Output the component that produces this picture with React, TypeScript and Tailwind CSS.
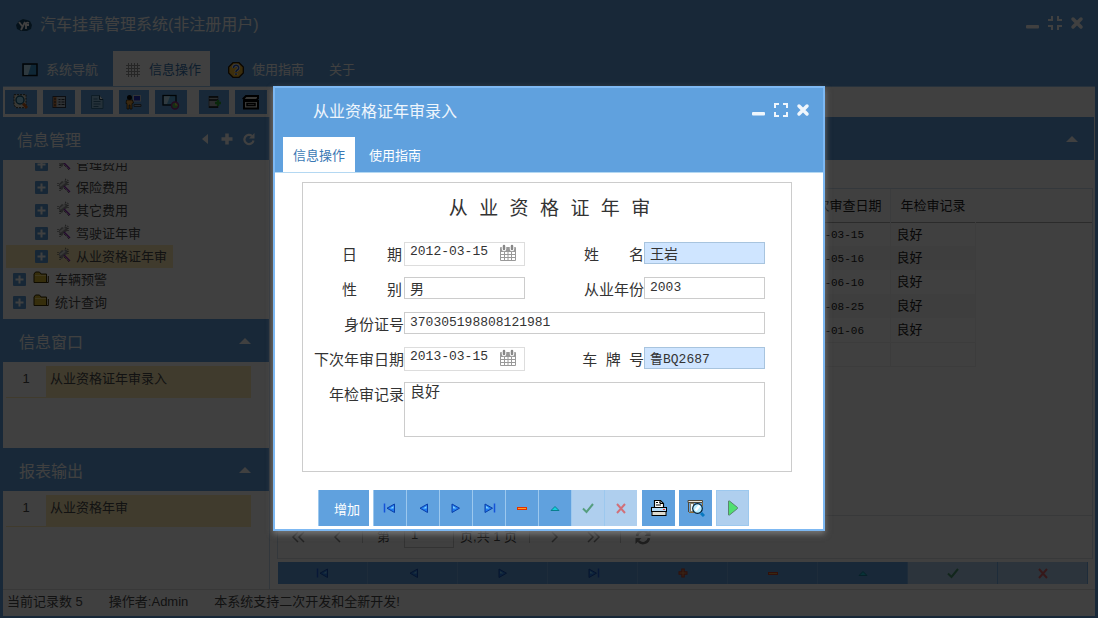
import React from "react";

const treeChildren = ["管理费用", "保险费用", "其它费用", "驾驶证年审", "从业资格证年审"];
const treeRoots = ["车辆预警", "统计查询"];
const records = ["2013-03-15", "2013-05-16", "2013-06-10", "2013-08-25", "2014-01-06"];

function MinimizeIcon() {
  return (
    <svg className="size-4" viewBox="0 0 16 16">
      <rect x="1" y="10" width="13" height="3.500" rx="1" fill="currentColor" />
    </svg>
  );
}

function MaximizeIcon() {
  return (
    <svg className="size-4" viewBox="0 0 16 16" fill="none" stroke="currentColor" strokeWidth="2">
      <path d="M2 6V2h4M10 2h4v4M14 10v4h-4M6 14H2v-4" />
    </svg>
  );
}

function RestoreIcon() {
  return (
    <svg className="size-4" viewBox="0 0 16 16" fill="none" stroke="currentColor" strokeWidth="2">
      <path d="M1 5h4V1M11 1v4h4M15 11h-4v4M5 15v-4H1" />
    </svg>
  );
}

function CloseIcon() {
  return (
    <svg className="size-4" viewBox="0 0 16 16" fill="none" stroke="currentColor" strokeWidth="3.500" strokeLinecap="round">
      <path d="M4 4l8 8M12 4l-8 8" />
    </svg>
  );
}

function WindowControls({ restore }: { restore?: boolean }) {
  return (
    <div className="flex items-center gap-1.5 pb-0.5">
      <button type="button" aria-label="最小化"><MinimizeIcon /></button>
      <button type="button" aria-label="最大化">{restore ? <RestoreIcon /> : <MaximizeIcon />}</button>
      <button type="button" aria-label="关闭"><CloseIcon /></button>
    </div>
  );
}

function CaretUp() {
  return (
    <svg className="h-1.5 w-3" viewBox="0 0 12 6">
      <path d="M6 0l6 6H0z" fill="currentColor" />
    </svg>
  );
}

type NavName = "first" | "prev" | "next" | "last" | "plus" | "minus" | "up" | "check" | "cross";

function NavIcon({ name }: { name: NavName }) {
  const left = (
    <>
      <path d="M12.500 4v8.500L5 8.200z" fill="#1f7af0" stroke="#0b3fa8" />
      <path d="M11.500 6v2.500H8z" fill="#7fd4ff" />
    </>
  );
  const right = (
    <>
      <path d="M4 4v8.500l7.500-4.300z" fill="#1f7af0" stroke="#0b3fa8" />
      <path d="M5 6v2.500h3.500z" fill="#7fd4ff" />
    </>
  );
  return (
    <svg className="size-4" viewBox="0 0 16 16">
      {name === "first" && <>{left}<path d="M2.500 3.500v9" stroke="#1452d8" strokeWidth="1.500" /></>}
      {name === "prev" && left}
      {name === "next" && right}
      {name === "last" && <>{right}<path d="M13.500 3.500v9" stroke="#1452d8" strokeWidth="1.500" /></>}
      {name === "plus" && (
        <>
          <path d="M8 3.500v9M3.500 8h9" stroke="#d82a00" strokeWidth="3.500" />
          <path d="M8 4.500v7M4.500 8h7" stroke="#ff9a3c" strokeWidth="1" />
        </>
      )}
      {name === "minus" && (
        <>
          <rect x="3" y="7" width="10" height="3" fill="#e03000" />
          <rect x="4" y="8" width="8" height="1" fill="#ffa020" />
        </>
      )}
      {name === "up" && <path d="M8 6.500l4 4H4z" fill="#12d0dc" stroke="#087f90" />}
      {name === "check" && <path d="M3 8.500l3.500 3.500L13 4" fill="none" stroke="#2f8a50" strokeWidth="2" />}
      {name === "cross" && <path d="M4 4l8 9M12 4l-8 9" fill="none" stroke="#e04848" strokeWidth="2" />}
    </svg>
  );
}

function AppLogo() {
  return (
    <svg className="size-4" viewBox="0 0 16 16">
      <path d="M3 4l4-2 4 1 3 1 2 4-1 4-4 2H5L1 12 0 8z" fill="#174a6c" />
      <path d="M3 5l3 4M9 5l-4 8M10 12V7q0-2 3-1M9 8h4" fill="none" stroke="#fff" strokeWidth="1.800" />
    </svg>
  );
}

function MonitorIcon() {
  return (
    <svg className="h-3.5 w-4" viewBox="0 0 16 14">
      <rect x="1" y="1" width="14" height="11.500" fill="#3f9cd8" stroke="#061018" strokeWidth="1.500" />
      <path d="M2 2h7L6 12H2z" fill="#b8e4fa" />
    </svg>
  );
}

function GridIcon() {
  return (
    <svg className="size-4" viewBox="0 0 16 16">
      <path d="M3.500 1v14M6.500 1v14M9.500 1v14M12.500 1v14M1 3.500h14M1 6.500h14M1 9.500h14M1 12.500h14" stroke="#999" />
    </svg>
  );
}

function HelpIcon() {
  return (
    <svg className="size-4" viewBox="0 0 16 16">
      <path d="M5 .7h6L15.300 5v6L11 15.300H5L.7 11V5z" fill="#f0b830" stroke="#2a1800" strokeWidth="1.300" />
      <path d="M5.500 6q0-2.700 2.600-2.700T10.700 6q0 1.200-1.400 2T8 10M8 11.200v1.900" fill="none" stroke="#f4f4ff" strokeWidth="3" />
      <path d="M5.500 6q0-2.700 2.600-2.700T10.700 6q0 1.200-1.400 2T8 10M8 11.200v1.900" fill="none" stroke="#2a56b0" strokeWidth="1.600" />
    </svg>
  );
}

function PreviewIcon() {
  return (
    <svg className="h-4 w-[18px]" viewBox="0 0 18 16">
      <path d="M2 .7h12v13H4L2 11z" fill="#e4e0d0" stroke="#3a3428" strokeDasharray="2 1" />
      <circle cx="8" cy="6" r="4" fill="#9cdcf6" stroke="#125878" strokeWidth="1.400" />
      <path d="M11 9.500l4 4.500" stroke="#c05818" strokeWidth="2.800" />
    </svg>
  );
}

function ListIcon() {
  return (
    <svg className="size-4" viewBox="0 0 16 16">
      <rect x="2" y="2.500" width="12.500" height="11" fill="#b8c4d0" stroke="#303a48" />
      <path d="M2.500 3h3v10h-3z" fill="#d07838" />
      <path d="M3 5h2M3 8h2M3 11h2M7.500 5.500h2M7.500 8h2M7.500 10.500h2M10.500 5.500h3M10.500 8h3M10.500 10.500h3" stroke="#26303a" />
    </svg>
  );
}

function PageIcon() {
  return (
    <svg className="size-4" viewBox="0 0 16 16">
      <path d="M2.500 1.500h8l3.500 4v9H2.500z" fill="#8fbfe0" stroke="#38759c" />
      <path d="M10.500 1.500v4H14" fill="#fff" stroke="#184058" />
      <path d="M4.500 5h4M4.500 7.500h7M4.500 10h7M4.500 12.500h5" stroke="#3a6f94" />
    </svg>
  );
}

function OperatorIcon() {
  return (
    <svg className="h-4 w-[18px]" viewBox="0 0 18 16">
      <rect x="8.500" y="1.500" width="7" height="5.500" fill="#2430c0" stroke="#c8ccd4" />
      <path d="M9 10.500h7v2H9z" fill="#a8acb4" stroke="#404850" />
      <circle cx="4.500" cy="3.500" r="2.500" fill="#080808" />
      <path d="M1.500 6h6l1 3-1.500.5V15H5v-4H4v4H2v-5.500H1z" fill="#e5a040" stroke="#2a1800" strokeWidth=".7" />
    </svg>
  );
}

function DisplayIcon() {
  return (
    <svg className="h-4 w-[18px]" viewBox="0 0 18 16">
      <rect x="1" y="1.500" width="13" height="9.500" fill="#5cb0e4" stroke="#061018" strokeWidth="1.300" />
      <path d="M2 2.300h6L5 10H2z" fill="#c2e6fa" />
      <circle cx="13" cy="11.500" r="3.500" fill="#58b858" stroke="#8f2a86" strokeWidth="1.500" />
      <path d="M13 8.500v3h3" fill="#e3d040" />
    </svg>
  );
}

function ServerAddIcon() {
  return (
    <svg className="size-4" viewBox="0 0 16 16">
      <rect x="3" y="2.500" width="9" height="11" fill="#b0b4b8" stroke="#60666c" />
      <path d="M3 3h9M3 6h9M3 13h9" stroke="#141a20" strokeWidth="1.300" />
      <path d="M12 6v6M9 9h6" stroke="#28a030" strokeWidth="2.400" />
    </svg>
  );
}

function CassetteIcon() {
  return (
    <svg className="h-4 w-[18px]" viewBox="0 0 18 16">
      <path d="M4 2h12v2.500L14 6H3L1.500 4.500z" fill="#e8e8e0" stroke="#000" strokeWidth="2" />
      <rect x="2" y="7" width="14" height="7.500" fill="#e8e8e0" stroke="#000" strokeWidth="2" />
      <path d="M5 9.500h8v2H5z" fill="#fff" stroke="#000" strokeWidth="1.500" />
    </svg>
  );
}

function PrinterIcon() {
  return (
    <svg className="size-[18px]" viewBox="0 0 18 18">
      <path d="M4.500 8V1.500h6l3 3V8" fill="#fff" stroke="#000" strokeWidth="1.200" />
      <path d="M6 3.500h2M9.500 3.500h1M6 6h5M10 1.500v3h3" stroke="#000" fill="none" />
      <rect x="1.500" y="8.500" width="15" height="4" fill="#b8dcf8" stroke="#000" />
      <rect x="2" y="12.500" width="14" height="4" fill="#dedbd0" stroke="#000" />
      <path d="M13 10.500h2" stroke="#f03030" />
    </svg>
  );
}

function SearchPageIcon() {
  return (
    <svg className="size-[18px]" viewBox="0 0 18 18">
      <path d="M1 1.500h14.500v2H1zM1.500 3.500V13" fill="#e8e4d8" stroke="#504838" />
      <rect x="3.500" y="4.500" width="3" height="8" fill="#e8f4fa" stroke="#8a8068" />
      <path d="M2 13.500h5M15.500 4v3" stroke="#8a6a38" />
      <circle cx="10.500" cy="9.500" r="4.800" fill="#b8ecff" stroke="#002038" strokeWidth="1.200" />
      <path d="M8.500 11.500l4-5" stroke="#fff" strokeWidth="2.500" />
      <path d="M14 14l3 3" stroke="#0878c0" strokeWidth="3" />
    </svg>
  );
}

function PlayIcon() {
  return (
    <svg className="h-4 w-3" viewBox="0 0 12 16">
      <path d="M1.500 1v14h1l8-6.500v-1L2.500 1z" fill="#4fe070" stroke="#5a8470" />
    </svg>
  );
}

function CalendarIcon() {
  return (
    <svg className="h-[18px] w-4" viewBox="0 0 16 18">
      <rect x="0" y="3" width="16" height="14" rx="1" fill="#999" />
      <path d="M4 2v3M12 2v3" stroke="#fff" strokeWidth="4.500" strokeLinecap="round" />
      <path d="M4 2v3M12 2v3" stroke="#888" strokeWidth="2.500" strokeLinecap="round" />
      <path d="M1 8h3v2H1zM5 8h2.500v2H5zM8.500 8H11v2H8.500zM12 8h3v2h-3zM1 11h3v2H1zM5 11h2.500v2H5zM8.500 11H11v2H8.500zM12 11h3v2h-3zM1 14h3v2H1zM5 14h2.500v2H5zM8.500 14H11v2H8.500zM12 14h3v2h-3z" fill="#fff" />
    </svg>
  );
}

function FolderIcon() {
  return (
    <svg className="h-4 w-4" viewBox="0 0 16 16">
      <path d="M1 12.500V4l1.500-2h4L8 4h5.500v8.500z" fill="#d8b830" stroke="#3a2c00" />
      <path d="M3.500 12.500h11.800V6" fill="none" stroke="#3a2c00" />
      <path d="M2 5.500h11" stroke="#f8e080" />
    </svg>
  );
}

function ToolIcon() {
  return (
    <svg className="size-4" viewBox="0 0 16 16">
      <path d="M3 6l3-3 2 1 1-2 3 2-1 3-3 2-2 3-2-1-1-3z" fill="#999" />
      <path d="M2 5v4M4 10v4M9 1l4 2M12 4v3" stroke="#444" strokeDasharray="1 1" />
      <path d="M4 8l5-4" stroke="#ddd" strokeWidth="2" />
      <path d="M8 8l6 6" stroke="#8a28b0" strokeWidth="1.500" />
      <path d="M8 10l5 5" stroke="#333" strokeDasharray="1 1" />
    </svg>
  );
}

function ExpandBox() {
  return (
    <svg className="size-[13px] shrink-0" viewBox="0 0 13 13">
      <rect width="13" height="13" rx="1" fill="#5b9bd5" />
      <path d="M6.500 2.500v8M2.500 6.500h8" stroke="#fff" strokeWidth="2" />
    </svg>
  );
}

function SidePanel({ title, item }: { title: string; item: string }) {
  return (
    <section className="h-[129px]">
      <header className="flex h-[43px] items-center justify-between bg-[#60a1de] pr-[18px] pl-4 text-white">
        <h2 className="pt-1 text-base leading-6">{title}</h2>
        <button type="button" aria-label="折叠"><CaretUp /></button>
      </header>
      <table className="mt-1 ml-[3px] w-[245px] border-collapse">
        <tbody>
          <tr className="h-[31px] border-b border-[#fdebb5] align-top">
            <td className="w-10 text-center leading-[25px]">1</td>
            <td className="bg-[#fdebb5] pl-1 leading-[25px]">{item}</td>
          </tr>
        </tbody>
      </table>
    </section>
  );
}

const toolbar: [string, () => React.ReactElement, string][] = [
  ["预览", PreviewIcon, "w-8"],
  ["列表", ListIcon, "w-8"],
  ["文档", PageIcon, "w-8"],
  ["操作员", OperatorIcon, "w-[30px]"],
  ["显示", DisplayIcon, "mr-1.5 w-8"],
  ["数据", ServerAddIcon, "w-[30px]"],
  ["备份", CassetteIcon, "w-8"],
];

const gridNav: [NavName, string][] = [
  ["first", "首条"],
  ["prev", "上一条"],
  ["next", "下一条"],
  ["last", "末条"],
  ["plus", "新增"],
  ["minus", "删除"],
  ["up", "编辑"],
  ["check", "保存"],
  ["cross", "取消"],
];

function MainTab({ label, icon, active }: { label: string; icon?: React.ReactNode; active?: boolean }) {
  return (
    <button
      type="button"
      className={
        "flex h-[35px] items-center gap-2 pt-0.5 pr-[9px] text-[13px] " +
        (icon ? "pl-3 " : "pl-2.5 ") +
        (active ? "bg-white text-[#3a78b4]" : "text-white")
      }
    >
      {icon}
      {label}
    </button>
  );
}

function Chevron({ d, label }: { d: string; label: string }) {
  return (
    <button type="button" aria-label={label} className="flex w-10 justify-center">
      <svg className="h-3 w-3.5" viewBox="0 0 14 12" fill="none" stroke="#888" strokeWidth="1.500">
        <path d={d} />
      </svg>
    </button>
  );
}

function Background() {
  return (
    <div className="flex min-h-screen flex-col border-x-[3px] border-b-2 border-[#60a1de] bg-white text-[13px] text-[#4a4a4a]">
      <header className="flex h-[87px] flex-col justify-between bg-[#60a1de] text-white">
        <div className="flex h-12 items-center justify-between pr-2.5 pl-[13px]">
          <h1 className="flex items-center gap-2 pt-px text-base leading-6">
            <AppLogo />
            汽车挂靠管理系统(非注册用户)
          </h1>
          <WindowControls restore />
        </div>
        <nav className="flex gap-1.5 border-b border-[#9cc8ee] pl-[7px]">
          <MainTab label="系统导航" icon={<MonitorIcon />} />
          <MainTab label="信息操作" icon={<GridIcon />} active />
          <MainTab label="使用指南" icon={<HelpIcon />} />
          <MainTab label="关于" />
        </nav>
      </header>
      <div className="flex h-[30px] items-center gap-1.5 pl-0.5">
        {toolbar.map(([label, Icon, size]) => (
          <button key={label} type="button" aria-label={label} className={"flex h-6 items-center justify-center bg-[#60a1de] " + size}>
            <Icon />
          </button>
        ))}
      </div>
      <div className="flex flex-1 gap-[7px]">
        <aside className="flex w-[267px] shrink-0 flex-col border-r border-[#c5dcf0]">
          <header className="flex h-[43px] items-center justify-between bg-[#60a1de] pr-[13px] pl-3.5 text-white">
            <h2 className="pt-1 text-base leading-6">信息管理</h2>
            <div className="flex items-center gap-2">
              <button type="button" aria-label="收起">
                <svg className="size-3.5" viewBox="0 0 14 14"><path d="M10 2v10L4 7z" fill="currentColor" /></svg>
              </button>
              <button type="button" aria-label="添加">
                <svg className="size-3.5" viewBox="0 0 14 14"><path d="M7 1.500v11M1.500 7h11" stroke="currentColor" strokeWidth="3.500" /></svg>
              </button>
              <button type="button" aria-label="刷新">
                <svg className="size-3.5" viewBox="0 0 14 14">
                  <path d="M10 4A4.600 4.600 0 1 0 11.500 8.500" fill="none" stroke="currentColor" strokeWidth="2.200" />
                  <path d="M12.500 1v5.500H7z" fill="currentColor" />
                </svg>
              </button>
            </div>
          </header>
          <ul className="mt-[3px] mb-[5px] flex h-[151px] flex-col justify-end overflow-hidden pl-[3px]">
            {treeChildren.map((name, i) => (
              <li key={name} className={"flex h-[23px] w-[167px] shrink-0 items-center pl-[29px] " + (i === 4 ? "bg-[#fdebb5]" : "")}>
                <ExpandBox />
                <span className="mr-1 ml-2 pb-1"><ToolIcon /></span>
                {name}
              </li>
            ))}
            {treeRoots.map((name) => (
              <li key={name} className="flex h-[23px] shrink-0 items-center pl-[7px]">
                <ExpandBox />
                <span className="mr-1.5 ml-[7px] pb-1"><FolderIcon /></span>
                {name}
              </li>
            ))}
          </ul>
          <SidePanel title="信息窗口" item="从业资格证年审录入" />
          <SidePanel title="报表输出" item="从业资格年审" />
        </aside>
        <main className="flex min-w-0 flex-1 flex-col">
          <header className="mr-px flex h-[43px] items-center justify-end bg-[#60a1de] pr-4 text-white">
            <button type="button" aria-label="折叠"><CaretUp /></button>
          </header>
          <div className="mt-7 mr-0.5 flex flex-1 flex-col border-x border-t border-[#cfe0ee]">
            <table className="w-full table-fixed border-collapse font-['Liberation_Mono','Noto_Sans_CJK_SC',monospace] text-[#222]">
              <thead>
                <tr className="h-[33px] border-b border-[#aaa]">
                  <th className="w-[510px]" />
                  <th className="w-[102px] border-r border-[#eceff2] pt-0.5 pr-2 text-right font-normal whitespace-nowrap">下次审查日期</th>
                  <th className="w-[85px] pt-0.5 pl-2.5 text-left font-normal">年检审记录</th>
                  <th />
                </tr>
              </thead>
              <tbody>
                {records.map((date, i) => (
                  <tr key={date} className={"h-[24px] " + (i % 2 ? "[&>td:not(:last-child)]:bg-[#f7f7f7]" : "")}>
                    <td />
                    <td className="border-r border-[#f2f2f2] pt-0.5 pl-2.5 text-[11px]">{date}</td>
                    <td className="border-r border-[#f2f2f2] pt-0.5 pl-1.5">良好</td>
                    <td />
                  </tr>
                ))}
                <tr className="h-[24px] [&>td:not(:last-child)]:border-y [&>td:not(:last-child)]:border-r [&>td]:border-[#f0f0f0]">
                  <td /><td /><td /><td />
                </tr>
              </tbody>
            </table>
            <div className="flex-1" />
            <div className="flex h-[44px] items-center border-y border-[#dfe4e8]">
              <Chevron label="第一页" d="M7 1L2 6l5 5M13 1L8 6l5 5" />
              <Chevron label="上一页" d="M9 1L4 6l5 5" />
              <span className="mx-1 h-3 border-l border-[#ccc]" />
              <label className="mx-2.5" htmlFor="page">第</label>
              <input id="page" defaultValue="1" className="ml-1 h-[22px] w-[50px] border border-[#ccc] pb-1.5 pl-1.5" />
              <span className="ml-1.5">页,共 1 页</span>
              <span className="mr-1 ml-3 h-3 border-l border-[#ccc]" />
              <Chevron label="下一页" d="M5 1l5 5-5 5" />
              <Chevron label="最后一页" d="M1 1l5 5-5 5M7 1l5 5-5 5" />
              <span className="mx-1.5 h-3 border-l border-[#ccc]" />
              <button type="button" aria-label="重新载入" className="ml-2">
                <svg className="size-4" viewBox="0 0 16 16">
                  <path d="M2 7a6 6 0 0 1 10.500-3M14 9a6 6 0 0 1-10.500 3" fill="none" stroke="#777" strokeWidth="2.500" />
                  <path d="M15.500 1v6h-6zM.5 15V9h6z" fill="#777" />
                </svg>
              </button>
            </div>
          </div>
          <div className="mt-[3px] mr-[7px] mb-[5px] ml-px flex h-[22px]">
            {gridNav.map(([name, label]) => (
              <button
                key={name}
                type="button"
                aria-label={label}
                className={
                  "flex flex-1 items-center justify-center border-r border-[#78b0e6] [&>svg]:opacity-80 " +
                  (name === "check" || name === "cross" ? "bg-[#afcfee]" : "bg-[#60a1de]")
                }
              >
                <NavIcon name={name} />
              </button>
            ))}
          </div>
        </main>
      </div>
      <footer className="flex h-[27px] items-center gap-[26px] border-t border-[#e0e0e0] bg-white pb-[3px] pl-1">
        <span>当前记录数 5</span>
        <span>操作者:Admin</span>
        <span>本系统支持二次开发和全新开发!</span>
      </footer>
    </div>
  );
}

const labelClass = "text-right text-[15px] leading-[25px] whitespace-pre";
const fieldClass =
  "h-[22px] w-full border border-[#ccc] bg-white pl-[5px] font-['Liberation_Mono','Noto_Sans_CJK_SC',monospace] outline-none";
const pickedClass =
  "h-[22px] w-full border border-[#a8c4de] bg-[#cfe5ff] pl-[5px] font-['Liberation_Mono','Noto_Sans_CJK_SC',monospace] outline-none";

function DateField({ id, value }: { id: string; value: string }) {
  return (
    <div className="flex h-6 border border-[#ddd] bg-white">
      <input
        id={id}
        defaultValue={value}
        className="min-w-0 flex-1 pb-1 pl-[5px] font-['Liberation_Mono',monospace] text-[13px] outline-none"
      />
      <button type="button" aria-label="选择日期" className="pr-2 pb-0.5"><CalendarIcon /></button>
    </div>
  );
}

const recordNav: [NavName, string][] = gridNav.filter(([name]) => name !== "plus");

function Dialog() {
  return (
    <div
      role="dialog"
      aria-labelledby="dialog-title"
      className="w-[552px] max-w-full border-2 border-[#7db8f2] bg-white text-[13px] text-[#333] shadow-[0_3px_6px_#777]"
    >
      <header className="flex h-[49px] items-center justify-between bg-[#60a1de] pr-3 pb-1 pl-[38px] text-white/90">
        <h2 id="dialog-title" className="pt-0.5 text-base leading-6">从业资格证年审录入</h2>
        <WindowControls />
      </header>
      <nav className="flex gap-1 border-b border-[#b4d8f2] bg-[#60a1de] pl-2">
        <button type="button" className="h-[35px] bg-white px-2.5 pt-0.5 text-[#3a78b4]">信息操作</button>
        <button type="button" className="h-[35px] px-2.5 pt-0.5 text-white">使用指南</button>
      </nav>
      <form className="pt-[9px] pb-[3px]">
        <div className="mr-[31px] ml-[27px] border border-[#ccc] pt-[17px] pr-[26px] pb-[34px] pl-[11px]">
          <h3 className="mb-[22px] pr-3 text-center font-['Liberation_Mono','Noto_Sans_CJK_SC',monospace] text-[19px] leading-5">
            <span className="pl-8">从 业 资 格 证 年 审</span>
          </h3>
          <div className="grid grid-cols-[90px_minmax(0,1fr)_119px_minmax(0,1fr)] auto-rows-[24px] items-start gap-y-[11px]">
            <label htmlFor="date" className={labelClass + " pr-0.5"}>日　　期</label>
            <DateField id="date" value="2012-03-15" />
            <label htmlFor="name" className={labelClass}>姓　　名</label>
            <input id="name" defaultValue="王岩" className={pickedClass + " text-[14px]"} />

            <label htmlFor="sex" className={labelClass + " pr-0.5"}>性　　别</label>
            <input id="sex" defaultValue="男" className={fieldClass + " text-[14px]"} />
            <label htmlFor="year" className={labelClass}>从业年份</label>
            <input id="year" defaultValue="2003" className={fieldClass + " pb-0.5 text-[13px]"} />

            <label htmlFor="idno" className={labelClass}>身份证号</label>
            <input id="idno" defaultValue="370305198808121981" className={fieldClass + " col-span-3 pb-0.5 text-[13px]"} />

            <label htmlFor="next" className={labelClass}>下次年审日期</label>
            <DateField id="next" value="2013-03-15" />
            <label htmlFor="plate" className={labelClass}>车  牌  号</label>
            <input id="plate" defaultValue="鲁BQ2687" className={pickedClass + " pb-0.5 text-[13px]"} />

            <label htmlFor="note" className={labelClass}>年检审记录</label>
            <textarea
              id="note"
              defaultValue="良好"
              className="col-span-3 -mb-8 block h-[55px] resize-none border border-[#ccc] pl-[5px] text-[15px] leading-[18px] outline-none"
            />
          </div>
          <div className="h-[31px]" />
        </div>
        <div className="mt-[18px] flex h-9 gap-1 pl-[43px]">
          <button type="button" className="w-[51px] border-l border-[#9cc8ee] bg-[#60a1de] pt-1 pl-1.5 text-[13px] text-white">增加</button>
          <div className="mr-px flex">
            {recordNav.map(([name, label]) => (
              <button
                key={name}
                type="button"
                aria-label={label}
                className={
                  "flex w-[33px] items-center justify-center border-l border-[#9cc8ee] " +
                  (name === "check" || name === "cross" ? "bg-[#afcfee] [&>svg]:opacity-70" : "bg-[#60a1de]")
                }
              >
                <NavIcon name={name} />
              </button>
            ))}
          </div>
          <button type="button" aria-label="打印" className="flex w-[33px] items-center justify-center bg-[#60a1de]"><PrinterIcon /></button>
          <button type="button" aria-label="打印预览" className="flex w-[33px] items-center justify-center bg-[#60a1de]"><SearchPageIcon /></button>
          <button type="button" aria-label="运行" className="flex w-[33px] items-center justify-center border border-[#9cc8ee] bg-[#afcfee]"><PlayIcon /></button>
        </div>
      </form>
    </div>
  );
}

export default function App() {
  return (
    <div className="relative font-['Liberation_Sans','Noto_Sans_CJK_SC',sans-serif]">
      <Background />
      <div className="absolute inset-0 flex items-center justify-center bg-black/75 pb-px">
        <Dialog />
      </div>
    </div>
  );
}
